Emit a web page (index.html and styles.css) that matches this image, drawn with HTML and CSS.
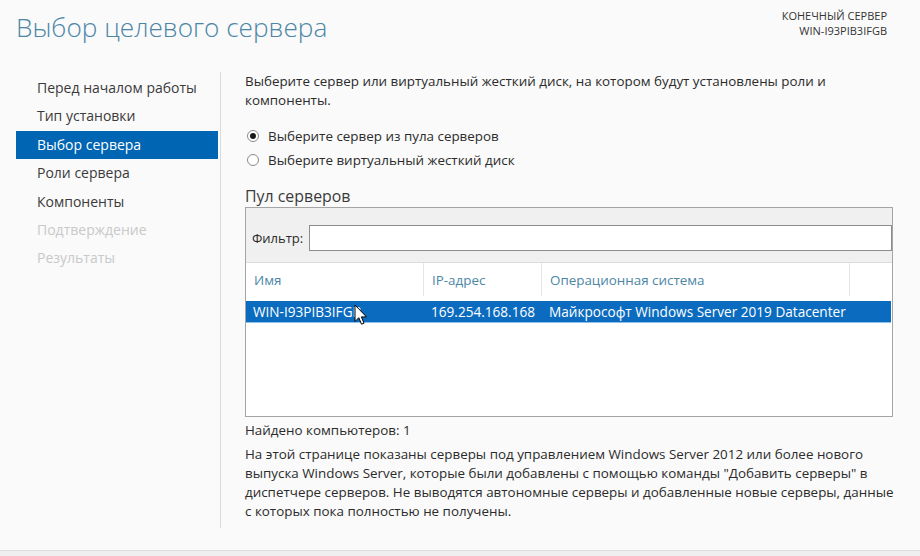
FILE: index.html
```html
<!DOCTYPE html>
<html lang="ru">
<head>
    <meta charset="UTF-8">
    <title>Выбор целевого сервера</title>
    <link rel="stylesheet" href="styles.css">
</head>
<body>
<div class="page">
    <div class="head">
        <h1>Выбор целевого сервера</h1>
        <div class="target">
            <div>КОНЕЧНЫЙ СЕРВЕР</div>
            <div>WIN-I93PIB3IFGB</div>
        </div>
    </div>
    <div class="main">
        <ul class="nav">
            <li>Перед началом работы</li>
            <li>Тип установки</li>
            <li class="on">Выбор сервера</li>
            <li>Роли сервера</li>
            <li>Компоненты</li>
            <li class="off">Подтверждение</li>
            <li class="off">Результаты</li>
        </ul>
        <div class="content">
            <p class="intro">Выберите сервер или виртуальный жесткий диск, на котором будут установлены роли и<br>компоненты.</p>
            <div class="radios">
                <label class="radio"><span class="dot checked"></span>Выберите сервер из пула серверов</label>
                <label class="radio"><span class="dot"></span>Выберите виртуальный жесткий диск</label>
            </div>
            <div class="pool-title">Пул серверов</div>
            <div class="pool">
                <div class="filter">
                    <span>Фильтр:</span>
                    <div class="input"></div>
                </div>
                <div class="grid-head">
                    <div class="col">Имя</div>
                    <div class="col">IP-адрес</div>
                    <div class="col">Операционная система</div>
                    <div class="col"></div>
                </div>
                <div class="row sel">
                    <div class="col">WIN-I93PIB3IFGB</div>
                    <div class="col">169.254.168.168</div>
                    <div class="col">Майкрософт Windows Server 2019 Datacenter</div>
                    <div class="col"></div>
                    <!-- указатель мыши поверх строки -->
                    <svg class="cursor" width="14" height="23" viewBox="0 0 14 23">
                        <path d="M1 1 L1 17.5 L4.8 13.7 L7.5 20.2 L10 19.2 L7.4 12.9 L12.5 12.9 Z" fill="#fff" stroke="#000" stroke-width="1" stroke-linejoin="round"/>
                    </svg>
                </div>
            </div>
            <div class="found">Найдено компьютеров: 1</div>
            <p class="note">На этой странице показаны серверы под управлением Windows Server 2012 или более нового<br>выпуска Windows Server, которые были добавлены с помощью команды "Добавить серверы" в<br>диспетчере серверов. Не выводятся автономные серверы и добавленные новые серверы, данные<br>с которых пока полностью не получены.</p>
        </div>
    </div>
    <div class="foot"></div>
</div>
</body>
</html>
```

FILE: styles.css
```css
*{
    padding: 0;
    margin: 0;
    list-style: none;
    box-sizing: border-box;
}
body{
    background: #efefef;
    font-family: "Open Sans", "Liberation Sans", sans-serif;
    color: #2b2b2b;
    font-size: 13.4px;
    width: 920px;
    height: 556px;
    overflow: hidden;
}
.page{
    background: #fafafa;
    height: 551px;
    border-bottom: 1px solid #dedede;
}
.head{
    height: 72px;
    display: flex;
    justify-content: space-between;
}
.head h1{
    font-weight: 300;
    font-size: 26.2px;
    color: #4b86a6;
    padding: 8px 0 0 16px;
    line-height: 38px;
}
.target{
    font-size: 11px;
    line-height: 15px;
    text-align: right;
    padding: 8px 33px 0 0;
    color: #333;
}
.main{
    display: flex;
    height: 456px;
}
.nav{
    width: 221px;
    border-right: 1px solid #dadada;
    padding-top: 2px;
    padding-left: 16px;
}
.nav li{
    height: 28.4px;
    line-height: 28px;
    padding-left: 21px;
    margin-right: 2px;
    font-size: 14px;
    color: #3a3a3a;
}
.nav li.on{
    background: #0065b3;
    color: #fff;
}
.nav li.off{
    color: #c9c9c9;
}
.content{
    padding-left: 24px;
    width: 690px;
}
.intro{
    line-height: 19px;
}
.radios{
    margin-top: 14px;
}
.radio{
    display: flex;
    align-items: center;
    height: 24px;
    gap: 9px;
    padding-left: 2px;
}
.dot{
    width: 12px;
    height: 12px;
    border: 1px solid #8a8a8a;
    border-radius: 50%;
    background: #fff;
    position: relative;
}
.dot.checked::after{
    content: "";
    position: absolute;
    left: 2px;
    top: 2px;
    width: 6px;
    height: 6px;
    border-radius: 50%;
    background: #1a1a1a;
}
.pool-title{
    margin-top: 13px;
    font-size: 15.9px;
    line-height: 22px;
    color: #3a3a3a;
}
.pool{
    width: 648px;
    height: 210px;
    border: 1px solid #a5a5a5;
    background: #fff;
}
.filter{
    height: 55px;
    background: #f0f0f0;
    display: flex;
    align-items: center;
    padding: 6px 0 0 6px;
    gap: 6px;
    border-bottom: 1px solid #dcdcdc;
}
.filter span{
    font-size: 13px;
}
.filter .input{
    flex: 1;
    height: 26px;
    background: #fff;
    border: 1px solid #8c8c8c;
}
.grid-head, .row{
    display: grid;
    grid-template-columns: 178px 118px 308px 1fr;
}
.grid-head{
    height: 38px;
    color: #4b86a6;
}
.grid-head .col{
    padding: 8px 0 0 8px;
    line-height: 18px;
    height: 33px;
    border-right: 1px solid #e6e6e6;
}
.grid-head .col:last-child{
    border-right: none;
}
.row{
    height: 22px;
    line-height: 21px;
    position: relative;
    margin-right: 1px;
    font-size: 13.6px;
}
.row .col{
    padding-left: 7px;
    white-space: nowrap;
}
.row.sel{
    background: #0b6cbf;
    color: #fff;
    border-bottom: 1px solid #8fc0ea;
}
.cursor{
    position: absolute;
    left: 108px;
    top: 3px;
}
.found{
    margin-top: 4px;
    line-height: 19px;
}
.note{
    margin-top: 5px;
    line-height: 19px;
}
```
